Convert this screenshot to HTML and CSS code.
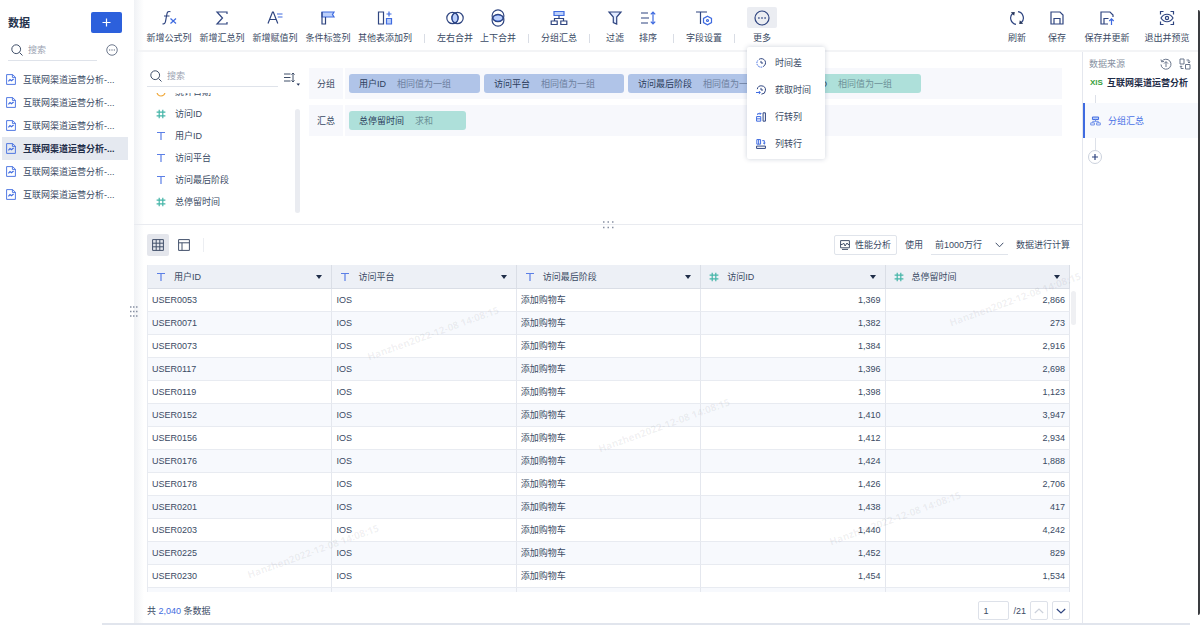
FILE: index.html
```html
<!DOCTYPE html>
<html lang="zh-CN">
<head>
<meta charset="utf-8">
<title>数据分析</title>
<link rel="stylesheet" href="styles.css">
</head>
<body>
<svg class="sprite" aria-hidden="true">
  <symbol id="search" viewBox="0 0 12 12"><circle cx="5.2" cy="5.2" r="4.4"/><path d="M8.5 8.5l3 3"/></symbol>
  <symbol id="dots" viewBox="0 0 16 16"><circle cx="8" cy="8" r="7"/><path d="M4.2 8h1.4M7.3 8h1.4M10.4 8h1.4" stroke-width="1.6"/></symbol>
  <symbol id="doc" viewBox="0 0 10 11"><path d="M.6.6h6l2.8 2.6v7.2H.6zM6.4.6v2.8h3" class="b thin"/><path d="M2.4 7.4l1.6-1.8 1.4 1.2L7.6 5" class="b"/></symbol>
  <symbol id="num" viewBox="0 0 10 10"><path d="M3.2.8v8.4M6.8.8v8.4M.6 3.2h8.8M.6 6.8h8.8"/></symbol>
  <symbol id="txt" viewBox="0 0 10 10"><path d="M1 1.500h8M5 1.500v7.500"/></symbol>
  <symbol id="clock" viewBox="0 0 10 10"><circle cx="5" cy="5" r="4"/><path d="M5 2.500V5h2"/></symbol>
  <symbol id="org" viewBox="0 0 18 16"><path d="M4 1.500h10v4H4z" class="b f"/><path d="M9 5.500v3M4.500 11V8.500h9V11M1.200 11h6v3.500h-6zM10.800 11h6v3.500h-6z"/></symbol>
</svg>
<div class="app">
  <div class="workspace">
    <aside class="sidebar">
      <header class="side-head">
        <h1>数据</h1>
        <button class="add" aria-label="新增"><svg width="9" height="9" viewBox="0 0 9 9"><path d="M4.500.5v8M.5 4.500h8"/></svg></button>
      </header>
      <div class="side-search">
        <label class="search"><svg width="12" height="12"><use href="#search"/></svg><input type="text" placeholder="搜索" aria-label="搜索数据"></label>
        <button class="plain" aria-label="更多选项"><svg width="12" height="12"><use href="#dots"/></svg></button>
      </div>
      <nav class="datasets">
        <a href="#"><svg width="10" height="11"><use href="#doc"/></svg>互联网渠道运营分析-...</a>
        <a href="#"><svg width="10" height="11"><use href="#doc"/></svg>互联网渠道运营分析-...</a>
        <a href="#"><svg width="10" height="11"><use href="#doc"/></svg>互联网渠道运营分析-...</a>
        <a href="#" class="current"><svg width="10" height="11"><use href="#doc"/></svg>互联网渠道运营分析-...</a>
        <a href="#"><svg width="10" height="11"><use href="#doc"/></svg>互联网渠道运营分析-...</a>
        <a href="#"><svg width="10" height="11"><use href="#doc"/></svg>互联网渠道运营分析-...</a>
      </nav>
      <svg class="side-grip" width="8" height="11" viewBox="0 0 8 11"><path d="M0 1h1.500M3 1h1.500M6 1h1.500M0 5.500h1.500M3 5.500h1.500M6 5.500h1.500M0 10h1.500M3 10h1.500M6 10h1.500"/></svg>
    </aside>
    <div class="stage">
      <div class="toolbar">
        <div class="tools">
          <button class="tool w5"><span class="pic"><svg width="16" height="16" viewBox="0 0 16 16"><path d="M9.500 1.800c-2.200-.8-3.200.2-3.600 2.200L4.500 11.500c-.4 2-1.400 2.700-3 2.200M3 6h5.500"/><path d="M9.500 8.500l5.500 5M15 8.500l-5.500 5" class="b"/></svg></span>新增公式列</button>
          <button class="tool w5"><span class="pic"><svg width="16" height="16" viewBox="0 0 16 16"><path d="M13 4V2H3l5.500 6L3 14h10v-2"/></svg></span>新增汇总列</button>
          <button class="tool w5"><span class="pic"><svg width="16" height="16" viewBox="0 0 16 16"><path d="M1 13.500L5.500 2h.8l4.500 11.500M2.600 9.500h6.600"/><path d="M10 4h5.500M10.800 7h4.700" class="b"/></svg></span>新增赋值列</button>
          <button class="tool w5"><span class="pic"><svg width="16" height="16" viewBox="0 0 16 16"><path d="M2 2h12l-1.500 2.500L14 7H2z" class="b f"/><path d="M2 2v12h3.500V7"/></svg></span>条件标签列</button>
          <button class="tool w6"><span class="pic"><svg width="16" height="16" viewBox="0 0 16 16"><path d="M1.500 2h5v12h-5z"/><path d="M9.500 8.500h5V14h-5z" class="b f"/><path d="M12 1.500v5M9.500 4h5" class="b"/></svg></span>其他表添加列</button>
          <i class="sep"></i>
          <button class="tool w4"><span class="pic"><svg width="18" height="16" viewBox="0 0 18 16"><ellipse cx="9" cy="8" rx="3" ry="5" class="b f"/><circle cx="6.500" cy="8" r="5.700"/><circle cx="11.500" cy="8" r="5.700"/></svg></span>左右合并</button>
          <button class="tool w4"><span class="pic"><svg width="16" height="18" viewBox="0 0 16 18"><ellipse cx="8" cy="9" rx="5" ry="3" class="b f"/><circle cx="8" cy="6.800" r="5.900"/><circle cx="8" cy="11.200" r="5.900"/></svg></span>上下合并</button>
          <i class="sep"></i>
          <button class="tool w4"><span class="pic"><svg width="18" height="16"><use href="#org"/></svg></span>分组汇总</button>
          <i class="sep"></i>
          <button class="tool w2"><span class="pic"><svg width="16" height="16" viewBox="0 0 16 16"><path d="M2 2h12l-4.300 5v7l-3.400-1.500V7z" class="p"/></svg></span>过滤</button>
          <button class="tool w2"><span class="pic"><svg width="16" height="16" viewBox="0 0 16 16"><path d="M1 3h7M1 8h8M1 13h7"/><path d="M13 2v12M10.800 4.300L13 2l2.200 2.300M10.800 11.700L13 14l2.200-2.300" class="b"/></svg></span>排序</button>
          <i class="sep"></i>
          <button class="tool w4"><span class="pic"><svg width="18" height="16" viewBox="0 0 18 16"><path d="M1 2h11M5.500 2v12"/><path d="M12.500 6.200l4 2.200v4.200l-4 2.200-4-2.200V8.400z" class="b"/><circle cx="12.500" cy="10.500" r="1" class="b"/></svg></span>字段设置</button>
          <i class="sep"></i>
          <div class="more">
            <button class="tool w3 open" aria-expanded="true"><span class="pic"><svg width="16" height="16"><use href="#dots"/></svg></span>更多</button>
            <div class="menu">
              <button><svg width="10" height="10" viewBox="0 0 12 12"><path d="M3.500 1.700A5 5 0 1 1 8.500 10.300"/><path d="M7.500 10.800A5 5 0 0 1 2.500 2.500" class="b" stroke-dasharray="2 1"/><path d="M6 3.500V6h2.500"/></svg>时间差</button>
              <button><svg width="10" height="10" viewBox="0 0 12 12"><path d="M1.500 5A5 5 0 1 1 6.500 11"/><path d="M6 3.500V6h2.500"/><path d="M0 9h5M3.500 7.300L5.200 9l-1.700 1.700" class="b"/></svg>获取时间</button>
              <button><svg width="10" height="10" viewBox="0 0 12 12"><path d="M8.500 1h2.800v10H8.500z"/><path d="M.7 5.500h5V11h-5zM.7 8.200h5M2 3.500V2h4M4.800.8L6 2 4.800 3.200" class="b"/></svg>行转列</button>
              <button><svg width="10" height="10" viewBox="0 0 12 12"><path d="M.7 8.500h10.600v2.800H.7z"/><path d="M1 .7h4.500v5.500H1zM3.200.7v5.500M7.500 2H10v4M8.700 4.800L10 6l1.300-1.200" class="b"/></svg>列转行</button>
            </div>
          </div>
        </div>
        <div class="actions">
          <button class="tool w2"><span class="pic"><svg width="16" height="16" viewBox="0 0 16 16"><path d="M7 14.300A6.400 6.400 0 0 1 3.800 3.200M9 1.700a6.400 6.400 0 0 1 3.200 11.100"/><path d="M1.800 2.200l4-.2-.6 3.800zM14.200 13.800l-4 .2.600-3.800z" class="solid"/></svg></span>刷新</button>
          <button class="tool w2"><span class="pic"><svg width="16" height="16" viewBox="0 0 16 16"><path d="M2 2h9l3 3v9H2zM5 14V8.500h6V14"/></svg></span>保存</button>
          <button class="tool w5"><span class="pic"><svg width="16" height="16" viewBox="0 0 16 16"><path d="M9 14H2V2h9l3 3v2M5 14V8.500h4.500"/><path d="M12.500 15V9M10.300 11l2.200-2.200 2.200 2.200" class="b"/></svg></span>保存并更新</button>
          <button class="tool w5"><span class="pic"><svg width="16" height="16" viewBox="0 0 16 16"><path d="M1.500 4.500v-3h3M11.500 1.500h3v3M14.500 11.500v3h-3M4.500 14.500h-3v-3M2 8c3-5 9-5 12 0-3 5-9 5-12 0z"/><circle cx="8" cy="8" r="1.600"/></svg></span>退出并预览</button>
        </div>
      </div>
      <div class="body">
        <main class="main">
          <section class="config">
            <div class="fields">
              <div class="field-head">
                <label class="search"><svg width="12" height="12"><use href="#search"/></svg><input type="text" placeholder="搜索" aria-label="搜索字段"></label>
                <button class="plain sort" aria-label="字段排序"><svg width="16" height="16" viewBox="0 0 16 16"><path d="M0 4h6.500M0 7.500h6.500M0 11h6.500M9 3v9M7.500 4.600L9 3l1.500 1.600M7.500 10.400L9 12l1.500-1.600"/><path d="M12.500 13.500h3.500l-1.700 2.200z" class="solid"/></svg></button>
              </div>
              <div class="field-body">
                <ul>
                  <li><svg class="date" width="10" height="10"><use href="#clock"/></svg>统计日期</li>
                  <li><svg class="num" width="10" height="10"><use href="#num"/></svg>访问ID</li>
                  <li><svg class="txt" width="10" height="10"><use href="#txt"/></svg>用户ID</li>
                  <li><svg class="txt" width="10" height="10"><use href="#txt"/></svg>访问平台</li>
                  <li><svg class="txt" width="10" height="10"><use href="#txt"/></svg>访问最后阶段</li>
                  <li><svg class="num" width="10" height="10"><use href="#num"/></svg>总停留时间</li>
                </ul>
                <i class="thumb"></i>
              </div>
            </div>
            <div class="shelves">
              <div class="shelf"><span class="shelf-name">分组</span>
                <div class="chips">
                  <span class="chip">用户ID<em>相同值为一组</em></span>
                  <span class="chip">访问平台<em>相同值为一组</em></span>
                  <span class="chip">访问最后阶段<em>相同值为一组</em></span>
                  <span class="chip green">访问ID<em>相同值为一组</em></span>
                </div>
              </div>
              <div class="shelf"><span class="shelf-name">汇总</span>
                <div class="chips"><span class="chip green">总停留时间<em>求和</em></span></div>
              </div>
            </div>
            <svg class="grip" width="11" height="8" viewBox="0 0 11 8"><path d="M0 1h1.500M4.500 1H6M9 1h1.500M0 6.500h1.500M4.500 6.500H6M9 6.500h1.500"/></svg>
          </section>
          <section class="preview">
            <div class="view-bar">
              <button class="view on" aria-label="表格"><svg width="12" height="12" viewBox="0 0 12 12"><path d="M.6.6h10.800v10.800H.6zM4.200.6v10.800M7.800.6v10.800M.6 4.200h10.800M.6 7.800h10.800"/></svg></button>
              <button class="view" aria-label="布局"><svg width="12" height="12" viewBox="0 0 12 12"><path d="M.6.6h10.800v10.800H.6zM.6 3.800h10.800M4 3.800v7.600"/></svg></button>
              <i class="bar-sep"></i>
              <button class="perf"><svg width="10" height="10" viewBox="0 0 10 10"><path d="M.6.6h8.800v7.200H.6zM2 9.400h6M.6 4.500h1.800l1.200-1.500 1.500 3L7 3l1 1.500h1.400"/></svg>性能分析</button>
              <label for="rows">使用</label>
              <span class="select"><select id="rows"><option>前1000万行</option></select><svg width="9" height="6" viewBox="0 0 9 6"><path d="M.7.8l3.800 4 3.800-4"/></svg></span>
              <span>数据进行计算</span>
            </div>
            <div class="grid">
              <div class="clip">
              <table>
                <thead><tr>
                  <th><div><svg class="txt" width="10" height="10"><use href="#txt"/></svg>用户ID<i class="caret"></i></div></th>
                  <th><div><svg class="txt" width="10" height="10"><use href="#txt"/></svg>访问平台<i class="caret"></i></div></th>
                  <th><div><svg class="txt" width="10" height="10"><use href="#txt"/></svg>访问最后阶段<i class="caret"></i></div></th>
                  <th><div><svg class="num" width="10" height="10"><use href="#num"/></svg>访问ID<i class="caret"></i></div></th>
                  <th><div><svg class="num" width="10" height="10"><use href="#num"/></svg>总停留时间<i class="caret"></i></div></th>
                </tr></thead>
                <tbody>
                  <tr><td>USER0053</td><td>IOS</td><td>添加购物车</td><td class="r">1,369</td><td class="r">2,866</td></tr>
                  <tr><td>USER0071</td><td>IOS</td><td>添加购物车</td><td class="r">1,382</td><td class="r">273</td></tr>
                  <tr><td>USER0073</td><td>IOS</td><td>添加购物车</td><td class="r">1,384</td><td class="r">2,916</td></tr>
                  <tr><td>USER0117</td><td>IOS</td><td>添加购物车</td><td class="r">1,396</td><td class="r">2,698</td></tr>
                  <tr><td>USER0119</td><td>IOS</td><td>添加购物车</td><td class="r">1,398</td><td class="r">1,123</td></tr>
                  <tr><td>USER0152</td><td>IOS</td><td>添加购物车</td><td class="r">1,410</td><td class="r">3,947</td></tr>
                  <tr><td>USER0156</td><td>IOS</td><td>添加购物车</td><td class="r">1,412</td><td class="r">2,934</td></tr>
                  <tr><td>USER0176</td><td>IOS</td><td>添加购物车</td><td class="r">1,424</td><td class="r">1,888</td></tr>
                  <tr><td>USER0178</td><td>IOS</td><td>添加购物车</td><td class="r">1,426</td><td class="r">2,706</td></tr>
                  <tr><td>USER0201</td><td>IOS</td><td>添加购物车</td><td class="r">1,438</td><td class="r">417</td></tr>
                  <tr><td>USER0203</td><td>IOS</td><td>添加购物车</td><td class="r">1,440</td><td class="r">4,242</td></tr>
                  <tr><td>USER0225</td><td>IOS</td><td>添加购物车</td><td class="r">1,452</td><td class="r">829</td></tr>
                  <tr><td>USER0230</td><td>IOS</td><td>添加购物车</td><td class="r">1,454</td><td class="r">1,534</td></tr>
                  <tr><td></td><td></td><td></td><td></td><td></td></tr>
                </tbody>
              </table>
              </div>
              <i class="thumb"></i>
              <span class="mark m1">Hanzhen2022-12-08 14:08:15</span>
              <span class="mark m2">Hanzhen2022-12-08 14:08:15</span>
              <span class="mark m3">Hanzhen2022-12-08 14:08:15</span>
              <span class="mark m4">Hanzhen2022-12-08 14:08:15</span>
              <span class="mark m5">Hanzhen2022-12-08 14:08:15</span>
            </div>
            <footer class="pager">
              <p>共 <b>2,040</b> 条数据</p>
              <input type="text" value="1" aria-label="页码">
              <span>/21</span>
              <button disabled aria-label="上一页"><svg width="10" height="6" viewBox="0 0 10 6"><path d="M.8 5L5 1l4.200 4"/></svg></button>
              <button aria-label="下一页"><svg width="10" height="6" viewBox="0 0 10 6"><path d="M.8 1L5 5l4.200-4"/></svg></button>
            </footer>
          </section>
        </main>
        <aside class="steps">
          <header><h2>数据来源</h2>
            <button class="plain" aria-label="更新来源"><svg width="12" height="12" viewBox="0 0 12 12"><path d="M1.800 3.500A5 5 0 1 1 1 6.500M1 1.500l.6 2.300L4 3.500M6 9V3.800M4 5.600l2-2 2 2"/></svg></button>
            <button class="plain" aria-label="替换来源"><svg width="12" height="12" viewBox="0 0 12 12"><path d="M1 1h4v5H1zM6.500 6.500H11V11H6.500zM7.500 2H10v3M8.700 3.800L10 5l1.300-1.200M4.500 10.500H2V8M.8 9L2 7.800 3.200 9"/></svg></button>
          </header>
          <div class="source"><span>XlS</span>互联网渠道运营分析</div>
          <i class="link"></i>
          <a href="#" class="step"><svg width="11" height="10"><use href="#org"/></svg>分组汇总</a>
          <i class="link tall"></i>
          <button class="plus" aria-label="添加步骤"><svg width="6" height="6" viewBox="0 0 6 6"><path d="M3 0v6M0 3h6"/></svg></button>
        </aside>
      </div>
    </div>
    <i class="edge"></i>
  </div>
  <i class="base"></i>
</div>
</body>
</html>
```
FILE: styles.css
```css
* { box-sizing: border-box; }
body { margin: 0; background: #fff; color: #3a4a64; font: 9px/14px "Liberation Sans", "Noto Sans CJK SC", sans-serif; }
button, input, select { font: inherit; color: inherit; margin: 0; padding: 0; border: 0; background: none; outline: 0; }
h1, h2, p, ul { margin: 0; padding: 0; list-style: none; }
a { color: inherit; text-decoration: none; }
i { display: block; }
svg { display: block; flex: none; fill: none; stroke: #2f4580; stroke-width: 1.2; }
.sprite { position: absolute; width: 0; height: 0; }
.b { stroke: #3f6be0; }
.thin { stroke-width: .9; }
.f { fill: #bcd0fb; }
.p { fill: #e2ebff; }
.txt { stroke: #5b7fe6; }
.num { stroke: #45b5a8; }
.date { stroke: #f0a93c; }
.solid { fill: #26365a; stroke: none; }

.app { height: 100vh; display: flex; flex-direction: column; }
.workspace { flex: 1; min-height: 0; display: flex; }
.base { height: 2px; margin: 0 10px 0 102px; background: #e1e5ed; }
.edge { width: 2px; margin: 10px 0 8px; background: #3a3c40; border-radius: 0 2px 2px 0; }

.sidebar { position: relative; width: 134px; flex: none; }
.side-head { display: flex; justify-content: space-between; align-items: center; padding: 12px 12px 0 8px; }
.side-head h1 { font-size: 11px; line-height: 16px; color: #26344d; }
.add { width: 31px; height: 21px; display: grid; place-items: center; background: #2c60dc; border-radius: 2px; }
.add svg { stroke: #fff; }
.side-search { display: flex; align-items: center; justify-content: space-between; padding: 6px 16px 0 8px; }
.side-search .search { width: 89px; height: 22px; }
.search { display: flex; align-items: center; gap: 5px; padding-left: 3px; border-bottom: 1px solid #dfe3ea; }
.search svg, .plain svg { stroke: #3f4e68; stroke-width: 1; }
.search input { width: 100%; min-width: 0; }
input::placeholder { color: #9aa3b2; opacity: 1; }
.datasets { padding: 7px 6px 0 2px; }
.datasets a { display: flex; align-items: center; gap: 7px; height: 23px; padding-left: 4px; white-space: nowrap; }
.datasets .current { background: #e5e9f0; color: #1f2d48; font-weight: bold; }
.side-grip { position: absolute; right: -4px; top: 306px; z-index: 2; }
.side-grip, .grip { stroke: #8790a2; stroke-width: 1.5; }

.stage { flex: 1; min-width: 0; display: flex; flex-direction: column; background: linear-gradient(90deg, #f0f2f5, #fff 10px); }
.toolbar { display: flex; justify-content: space-between; height: 52px; padding: 7px 8px 0 12px; border-bottom: 2px solid #f3f4f6; }
.tools, .actions { display: flex; gap: 7px; }
.tool { display: flex; flex-direction: column; align-items: center; gap: 3px; height: 38px; white-space: nowrap; flex: none; }
.w2 { width: 26px; }
.w3 { width: 30px; }
.w4 { width: 36px; }
.w5 { width: 46px; }
.w6 { width: 54px; }
.actions { gap: 14px; }
.pic { width: 30px; height: 21px; display: grid; place-items: center; border-radius: 2px; }
.open .pic { background: #ebedf2; }
.sep { width: 1px; height: 9px; margin: 27px 5px 0; background: #d9dde5; }
.more { position: relative; }
.menu { position: absolute; z-index: 5; left: 0; top: 40px; width: 78px; padding: 2px 0; background: #fff; border-radius: 2px; box-shadow: 0 0 5px rgba(30, 50, 90, .22); }
.menu button { display: flex; align-items: center; gap: 9px; width: 100%; height: 27px; padding-left: 9px; }

.body { flex: 1; min-height: 0; display: flex; }
.main { flex: 1; min-width: 0; display: flex; flex-direction: column; }
.config { position: relative; display: flex; gap: 9px; height: 173px; padding: 14px 20px 11px 13px; border-bottom: 1px solid #e9ebf0; }
.grip { position: absolute; left: 50%; bottom: -5px; margin-left: -5px; }
.fields { width: 153px; flex: none; display: flex; flex-direction: column; }
.field-head { display: flex; justify-content: space-between; align-items: center; }
.field-head .search { width: 131px; height: 21px; }
.sort { padding-top: 2px; }
.field-body { flex: 1; min-height: 0; display: flex; justify-content: space-between; align-items: flex-end; margin-top: 6px; }
.field-body ul { height: 100%; overflow: hidden; display: flex; flex-direction: column; justify-content: flex-end; }
.field-body li { flex: none; display: flex; align-items: center; gap: 9px; height: 22px; padding-left: 9px; }
.field-body .thumb { width: 5px; height: 104px; border-radius: 3px; background: #eaecf1; }
.shelves { flex: 1; min-width: 0; display: grid; gap: 6px; align-content: start; padding-top: 2px; }
.shelf { display: flex; gap: 2px; height: 31px; }
.shelf-name { width: 34px; display: grid; place-items: center; background: #f7f8fc; }
.chips { flex: 1; min-width: 0; display: flex; align-items: center; gap: 4px; padding-left: 4px; background: #f7f8fc; }
.chip { display: flex; align-items: center; gap: 11px; min-width: 117px; height: 19px; padding: 0 29px 0 10px; background: #b0c4e8; border-radius: 3px; white-space: nowrap; color: #2c3d5c; }
.chip em { font-style: normal; color: #6c7f9f; }
.green { background: #aee0da; }
.green em { color: #6c9198; }

.preview { flex: 1; min-height: 0; display: flex; flex-direction: column; padding: 9px 12px 0 13px; }
.view-bar { display: flex; align-items: center; height: 22px; gap: 8px; }
.view-bar > * { flex: none; }
.view { width: 22px; height: 22px; display: grid; place-items: center; border-radius: 2px; }
.view svg, .perf svg, .select svg { stroke: #42506b; stroke-width: 1; }
.view.on { background: #e4e6ec; }
.view + .view { margin-left: -4px; }
.bar-sep { width: 1px; height: 14px; background: #eceef2; }
.perf { display: flex; align-items: center; gap: 5px; height: 20px; padding: 0 5px; margin-left: auto; border: 1px solid #e0e4eb; border-radius: 2px; }
.select { position: relative; width: 77px; border-bottom: 1px solid #e0e4eb; }
.select select { appearance: none; width: 100%; height: 18px; padding-left: 4px; }
.select svg { position: absolute; right: 4px; top: 6px; pointer-events: none; }
.grid { position: relative; flex: 1; min-height: 0; margin-top: 9px; }
.clip { height: 100%; overflow: hidden; }
table { width: 100%; table-layout: fixed; border-collapse: separate; border-spacing: 0; border-left: 1px solid #e8ebf1; }
th, td { padding: 0 4px; text-align: left; font-weight: normal; border-right: 1px solid #e4e7ee; border-bottom: 1px solid #e8ebf1; }
th { height: 24px; background: #edf0f6; border-color: #dadee6; }
th div { display: flex; align-items: center; gap: 8px; padding: 0 5px 0 4px; }
td { height: 23px; }
td.r { text-align: right; }
tbody tr:nth-child(even) { background: #f7f9fd; }
.caret { margin-left: auto; border: 3px solid transparent; border-top: 4px solid #1f2d48; border-bottom: 0; }
.grid .thumb { position: absolute; right: -6px; top: 26px; width: 5px; height: 34px; border-radius: 3px; background: #eff0f3; }
.mark { position: absolute; font: bold 10px/12px "Open Sans", sans-serif; color: rgba(60, 60, 70, .08); transform: translate(-50%, -50%) rotate(-20deg); white-space: nowrap; pointer-events: none; }
.m1 { left: 31%; top: 68px; }
.m2 { left: 56%; top: 160px; }
.m3 { left: 18%; top: 286px; }
.m4 { left: 81%; top: 253px; }
.m5 { left: 94%; top: 34px; }
.pager { display: flex; align-items: center; gap: 4px; height: 31px; padding-top: 6px; flex: none; }
.pager p { margin-right: auto; align-self: center; }
.pager b { font-weight: normal; color: #3f6be0; }
.pager input { width: 31px; height: 19px; padding-left: 4px; border: 1px solid #dde1e9; border-radius: 2px; }
.pager button { width: 18px; height: 19px; display: grid; place-items: center; border: 1px solid #dde1e9; border-radius: 2px; }
.pager button:disabled svg { stroke: #ccd1db; }

.steps { width: 116px; flex: none; border-left: 1px solid #e4e7ee; }
.steps header { display: flex; align-items: center; gap: 7px; padding: 5px 7px 0 6px; }
.steps h2 { flex: 1; font-size: 9px; line-height: 14px; font-weight: normal; color: #8791a2; }
.steps .plain svg { stroke: #6b778c; }
.source { display: flex; align-items: center; gap: 5px; height: 24px; padding-left: 7px; font-weight: bold; color: #1f2d48; white-space: nowrap; }
.source span { width: 12px; font: bold 8px/14px "Liberation Sans", sans-serif; color: #38a03c; }
.link { width: 1px; height: 8px; margin-left: 12px; background: #dde1e9; }
.tall { height: 12px; }
.step { display: flex; align-items: center; gap: 7px; height: 35px; padding-left: 5px; border-left: 2px solid #3f6be0; background: #f7f9fd; color: #4a72e6; }
.step svg { stroke: #6f90ea; stroke-width: 1.6; }
.plus { width: 14px; height: 14px; margin-left: 5px; display: grid; place-items: center; border: 1px solid #ccd2dd; border-radius: 50%; }
```
